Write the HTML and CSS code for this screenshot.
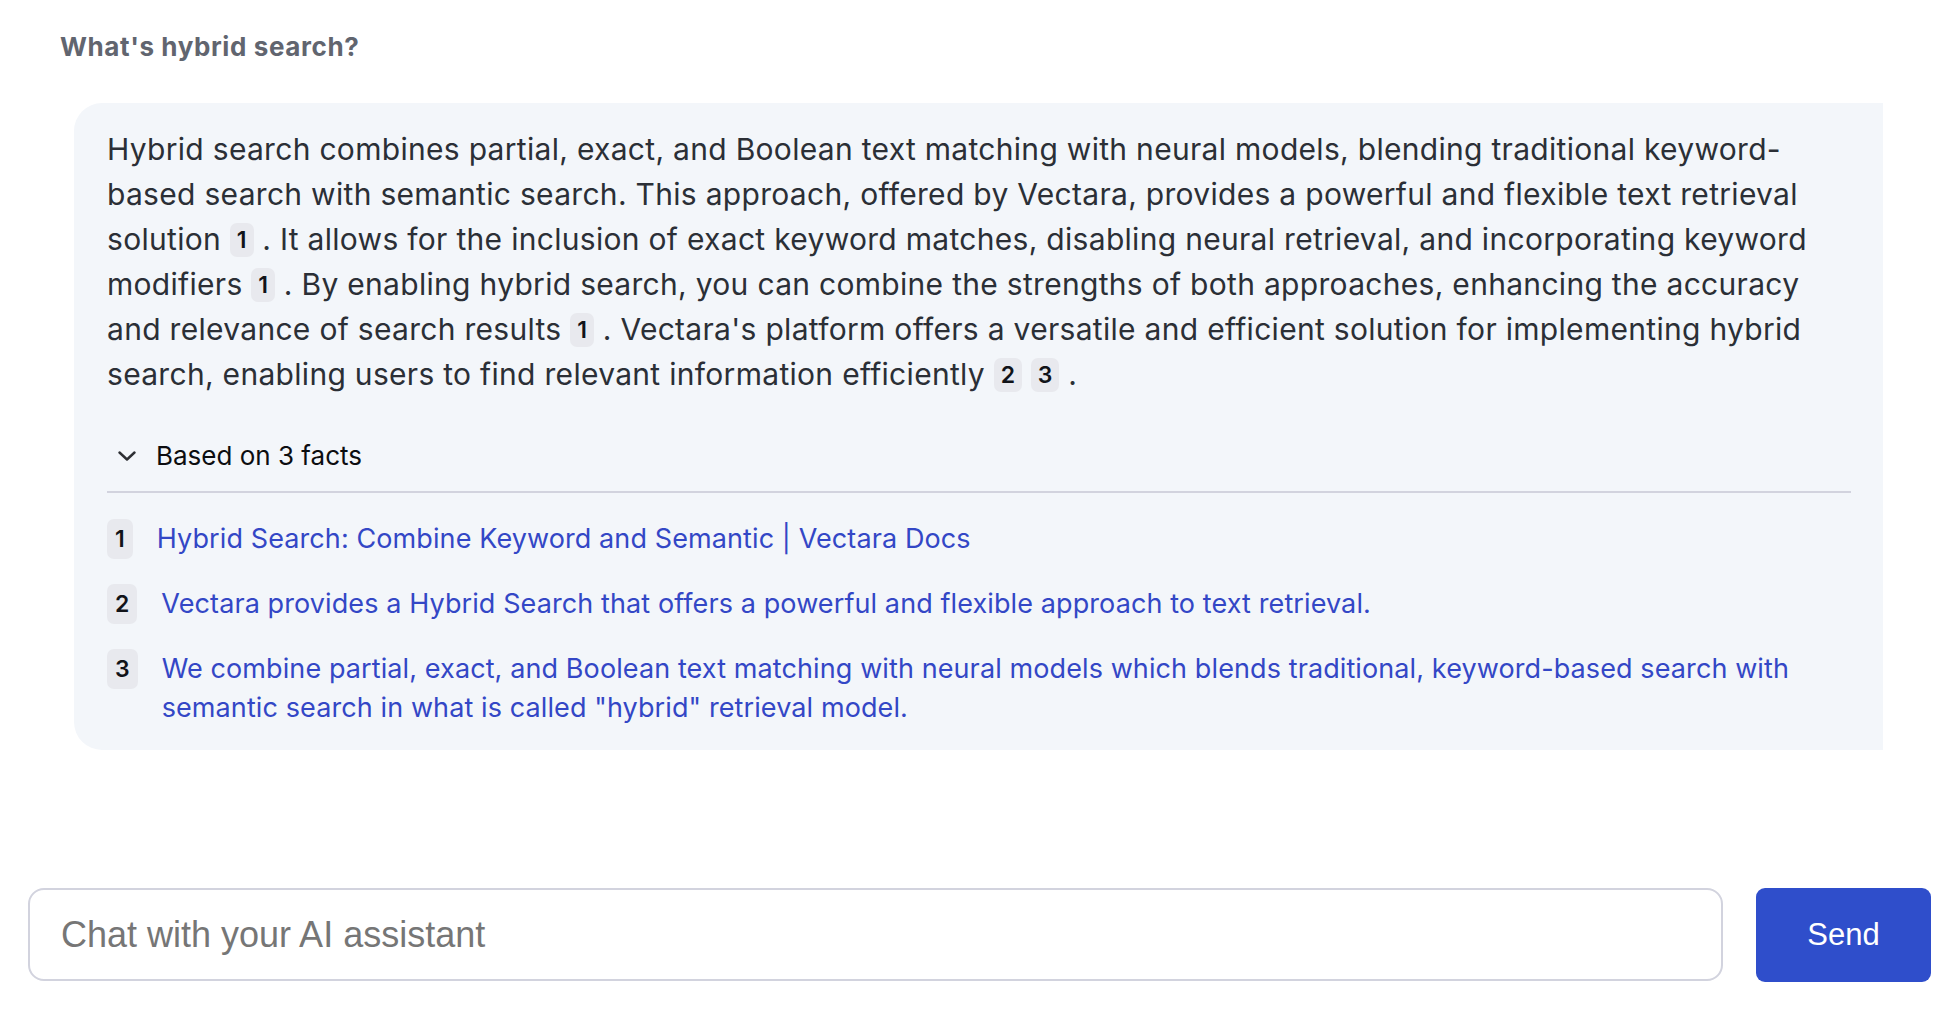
FILE: index.html
```html
<!DOCTYPE html>
<html lang="en">
<head>
<meta charset="utf-8">
<title>Chat</title>
<link rel="stylesheet" href="styles.css">
</head>
<body>
<main class="chat">
  <section class="history">
    <div class="question">What's hybrid search?</div>
    <article class="answer">
      <p class="answer-text">Hybrid search combines partial, exact, and Boolean text matching with neural models, blending traditional keyword-based search with semantic search. This approach, offered by Vectara, provides a powerful and flexible text retrieval solution <span class="cite">1</span> . It allows for the inclusion of exact keyword matches, disabling neural retrieval, and incorporating keyword modifiers <span class="cite">1</span> . By enabling hybrid search, you can combine the strengths of both approaches, enhancing the accuracy and relevance of search results <span class="cite">1</span> . Vectara's platform offers a versatile and efficient solution for implementing hybrid search, enabling users to find relevant information efficiently <span class="cite">2</span> <span class="cite">3</span> .</p>
      <details class="facts" open>
        <summary class="facts-summary">
          <svg class="chevron" width="18" height="10" viewBox="0 0 18 10" aria-hidden="true"><polyline points="1.5,1.5 9,8.5 16.5,1.5" fill="none" stroke="#2d2f33" stroke-width="2.4" stroke-linecap="round" stroke-linejoin="round"/></svg>
          <span>Based on 3 facts</span>
        </summary>
        <ol class="fact-list">
          <li class="fact"><span class="fact-num">1</span><a class="fact-link" href="#">Hybrid Search: Combine Keyword and Semantic | Vectara Docs</a></li>
          <li class="fact"><span class="fact-num">2</span><a class="fact-link" href="#">Vectara provides a Hybrid Search that offers a powerful and flexible approach to text retrieval.</a></li>
          <li class="fact"><span class="fact-num">3</span><a class="fact-link" href="#">We combine partial, exact, and Boolean text matching with neural models which blends traditional, keyword-based search with semantic search in what is called "hybrid" retrieval model.</a></li>
        </ol>
      </details>
    </article>
  </section>
  <form class="composer" onsubmit="return false">
    <input class="composer-input" type="text" placeholder="Chat with your AI assistant">
    <button class="composer-send" type="submit">Send</button>
  </form>
</main>
</body>
</html>
```
FILE: styles.css
```css
* { box-sizing: border-box; }

html, body {
  margin: 0;
  padding: 0;
  background: #ffffff;
}

body {
  font-family: Inter, "Liberation Sans", Arial, sans-serif;
  color: #2b2f36;
}

.chat {
  height: 100vh;
  display: flex;
  flex-direction: column;
}

.history {
  flex: 1;
  padding: 31px 75px 0 60px;
}

.question {
  font-size: 26px;
  line-height: 32px;
  font-weight: 700;
  letter-spacing: 0.6px;
  color: #61656f;
}

.answer {
  margin: 40px 0 0 14px;
  background: #f3f6fa;
  border-radius: 28px 0 0 28px;
  padding: 24px 32px 23px 33px;
}

.answer-text {
  margin: 0 24px 0 0;
  font-size: 30px;
  line-height: 45px;
  letter-spacing: 0.3px;
  color: #2b2f36;
}

.cite {
  display: inline-block;
  font-size: 23px;
  font-weight: 600;
  line-height: 34px;
  letter-spacing: 0;
  padding: 0 7px;
  border-radius: 7px;
  background: #e8e9ee;
  color: #111318;
  vertical-align: 2px;
}

.facts {
  margin-top: 39px;
}

.facts-summary {
  list-style: none;
  display: flex;
  align-items: center;
  gap: 20px;
  padding: 0 0 15px 11px;
  border-bottom: 2px solid #d2d3de;
  font-size: 26px;
  line-height: 40px;
  color: #0c0d10;
  cursor: pointer;
}

.facts-summary::-webkit-details-marker { display: none; }

.chevron { flex-shrink: 0; display: block; }

.fact-list {
  list-style: none;
  margin: 26px 0 0;
  padding: 0;
  display: flex;
  flex-direction: column;
  gap: 25px;
}

.fact {
  display: flex;
  align-items: flex-start;
  gap: 24px;
}

.fact-num {
  flex-shrink: 0;
  font-size: 23px;
  font-weight: 600;
  line-height: 40px;
  padding: 0 8px;
  border-radius: 7px;
  background: #e8e9ee;
  color: #111318;
}

.fact-link {
  font-size: 27px;
  line-height: 39px;
  letter-spacing: 0.1px;
  color: #3347c6;
  text-decoration: none;
}

.composer {
  display: flex;
  gap: 33px;
  padding: 0 27px 28px 28px;
}

.composer-input {
  flex: 1;
  height: 93px;
  border: 2px solid #d2d3de;
  border-radius: 16px;
  padding: 0 31px;
  font-family: "Liberation Sans", Arial, Helvetica, sans-serif;
  font-size: 36px;
  color: #222;
  background: #fff;
  outline: none;
}

.composer-input::placeholder { color: #767676; }

.composer-send {
  width: 175px;
  height: 94px;
  border: none;
  border-radius: 9px;
  background: #2f4ecb;
  color: #ffffff;
  font-family: "Liberation Sans", Arial, Helvetica, sans-serif;
  font-size: 31px;
  cursor: pointer;
}
```
